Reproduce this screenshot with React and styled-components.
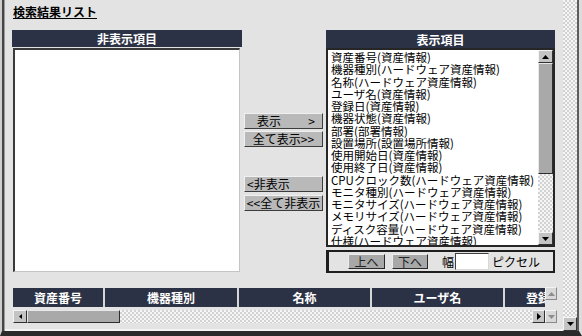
import styled, { createGlobalStyle } from 'styled-components';

const GlobalStyle = createGlobalStyle`
  html, body {
    margin: 0;
    padding: 0;
    background: #e3e3e3;
  }
  body {
    font-family: "Noto Sans CJK JP", "DejaVu Sans", sans-serif;
    font-size: 12px;
    color: #000;
  }
`;

const NAVY = '#2c3245';

const checker = `
  background-color: #f2f2f2;
  background-image: repeating-conic-gradient(#d2d2d2 0 25%, #f6f6f6 0 50%);
  background-size: 4px 4px;
`;

const Frame = styled.div`
  display: flex;
  width: 582px;
  height: 336px;
  box-sizing: border-box;
  border-left: 2px solid #cdcdcd;
  border-right: 3px solid #dcdcdc;
  border-bottom: 5px solid #2a2a2a;
  background: #e3e3e3;
  overflow: hidden;
`;

const Content = styled.div`
  flex: 1;
  min-width: 0;
  box-sizing: border-box;
  border-left: 2px solid #454545;
  box-shadow: inset 1px 0 0 #9a9a9a, inset 0 -2px 0 #f4f4f4;
  padding: 5px 8px 0 8px;
  display: flex;
  flex-direction: column;
`;

const Title = styled.h1`
  margin: 0 0 0 1px;
  font-size: 12px;
  line-height: 14px;
  font-weight: bold;
  text-decoration: underline;
  text-underline-offset: 1px;
`;

const Selector = styled.div`
  display: flex;
  align-items: flex-start;
  margin-top: 11px;
`;

const Panel = styled.div`
  width: ${(p) => p.$w}px;
  display: flex;
  flex-direction: column;
`;

const PanelHeader = styled.div`
  height: ${(p) => p.$h}px;
  background: ${NAVY};
  color: #fff;
  font-weight: bold;
  font-size: 12px;
  display: flex;
  align-items: center;
  justify-content: center;
`;

const HiddenList = styled.div`
  height: 224px;
  margin: 1px 2px 0 1px;
  box-sizing: border-box;
  background: #fff;
  border-top: 2px solid #3a3a3a;
  border-left: 2px solid #3a3a3a;
  border-right: 1px solid #c4c4c4;
  border-bottom: 1px solid #c4c4c4;
`;

const MoveButtons = styled.div`
  width: 79px;
  margin: 0 3px 0 2px;
  padding-top: 83px;
  display: flex;
  flex-direction: column;
`;

const MoveButton = styled.button`
  height: 16px;
  margin-top: ${(p) => p.$gap || 0}px;
  padding: 0 ${(p) => p.$pr || 4}px 0 ${(p) => p.$pl || 4}px;
  box-sizing: border-box;
  display: flex;
  align-items: center;
  justify-content: ${(p) => p.$justify || 'center'};
  background: #b9b9b9;
  border: 1px solid;
  border-color: #f0f0f0 #3c3c3c #3c3c3c #f0f0f0;
  font-family: inherit;
  font-size: 12px;
  line-height: 14px;
  color: #000;
  white-space: pre;
`;

const ShownList = styled.div`
  height: 199px;
  box-sizing: border-box;
  border: 2px solid #262626;
  background: #fff;
  display: flex;
`;

const Items = styled.ul`
  flex: 1;
  min-width: 0;
  margin: 0;
  padding: 1px 0 0 3px;
  list-style: none;
  overflow: hidden;
`;

const Item = styled.li`
  height: 12.25px;
  line-height: 12.25px;
  font-size: 11.5px;
  white-space: nowrap;
`;

const VBar = styled.div`
  width: ${(p) => p.$w}px;
  display: flex;
  flex-direction: column;
  justify-content: ${(p) => p.$justify || 'flex-start'};
`;

const ScrollBtn = styled.div`
  width: ${(p) => p.$w}px;
  height: ${(p) => p.$h}px;
  flex: none;
  box-sizing: border-box;
  display: flex;
  align-items: center;
  justify-content: center;
  background: ${(p) => (p.$dim ? '#d8d8d8' : '#c4c4c4')};
  border: 1px solid;
  border-color: ${(p) =>
    p.$dim ? '#f4f4f4 #8a8a8a #8a8a8a #f4f4f4' : '#f4f4f4 #303030 #303030 #f4f4f4'};
`;

const Thumb = styled.div`
  flex: none;
  ${(p) => (p.$vertical ? `height: ${p.$size}px;` : `width: ${p.$size}px;`)}
  box-sizing: border-box;
  background: #a9a9a9;
  border: 1px solid;
  border-color: #e8e8e8 #2e2e2e #2e2e2e #e8e8e8;
`;

const Track = styled.div`
  flex: 1;
  ${checker}
`;

const OrderBar = styled.div`
  height: 23px;
  margin-top: 3px;
  box-sizing: border-box;
  border: 2px solid #1e1e1e;
  border-left-width: 3px;
  padding-left: 19px;
  display: flex;
  align-items: center;
`;

const OrderButton = styled.button`
  width: ${(p) => p.$w}px;
  height: 15px;
  margin-right: ${(p) => p.$mr}px;
  padding: 0;
  box-sizing: border-box;
  background: #a8a8a8;
  border: 1px solid;
  border-color: #ececec #2a2a2a #2a2a2a #ececec;
  font-family: inherit;
  font-size: 12px;
  line-height: 13px;
  color: #222;
`;

const Label = styled.span`
  font-size: 12px;
  line-height: 14px;
  margin-right: ${(p) => p.$mr || 0}px;
`;

const WidthInput = styled.input`
  width: 34px;
  height: 17px;
  margin-right: 3px;
  padding: 0;
  box-sizing: border-box;
  background: #fff;
  border: 1px solid;
  border-color: #404040 #d8d8d8 #d8d8d8 #404040;
  outline: none;
`;

const TableArea = styled.div`
  display: flex;
  width: 544px;
  height: 36px;
  margin: 14px 0 0 1px;
`;

const TableScroll = styled.div`
  flex: 1;
  min-width: 0;
  padding-top: 1px;
  display: flex;
  flex-direction: column;
`;

const HeaderRow = styled.div`
  height: 19px;
  display: flex;
  overflow: hidden;
`;

const HeadCell = styled.div`
  width: ${(p) => p.$w}px;
  flex: none;
  box-sizing: border-box;
  border-right: 2px solid #d6d6d6;
  background: ${NAVY};
  color: #fff;
  font-weight: bold;
  font-size: 12px;
  display: flex;
  align-items: center;
  justify-content: center;
  white-space: nowrap;
  overflow: hidden;
`;

const HBar = styled.div`
  height: 13px;
  margin-top: 3px;
  display: flex;
`;

const WindowScroll = styled.div`
  width: 16px;
  box-sizing: border-box;
  border-right: 2px solid #5c5c5c;
  display: flex;
  flex-direction: column;
`;

const Tri = ({ dir, size = 7, color = '#000' }) => {
  const h = Math.ceil(size / 2);
  const flat = dir === 'up' || dir === 'down';
  const w = flat ? size : h;
  const hh = flat ? h : size;
  const pts = {
    up: `0,${h} ${size / 2},0 ${size},${h}`,
    down: `0,0 ${size},0 ${size / 2},${h}`,
    left: `${h},0 ${h},${size} 0,${size / 2}`,
    right: `0,0 0,${size} ${h},${size / 2}`,
  }[dir];
  return (
    <svg width={w} height={hh} viewBox={`0 0 ${w} ${hh}`}>
      <polygon points={pts} fill={color} />
    </svg>
  );
};

const shown = [
  '資産番号(資産情報)',
  '機器種別(ハードウェア資産情報)',
  '名称(ハードウェア資産情報)',
  'ユーザ名(資産情報)',
  '登録日(資産情報)',
  '機器状態(資産情報)',
  '部署(部署情報)',
  '設置場所(設置場所情報)',
  '使用開始日(資産情報)',
  '使用終了日(資産情報)',
  'CPUクロック数(ハードウェア資産情報)',
  'モニタ種別(ハードウェア資産情報)',
  'モニタサイズ(ハードウェア資産情報)',
  'メモリサイズ(ハードウェア資産情報)',
  'ディスク容量(ハードウェア資産情報)',
  '仕様(ハードウェア資産情報)',
];

const columns = [
  { label: '資産番号', w: 92 },
  { label: '機器種別', w: 134 },
  { label: '名称', w: 133 },
  { label: 'ユーザ名', w: 133 },
  { label: '登録日', w: 80 },
];

export default function App() {
  return (
    <>
      <GlobalStyle />
      <Frame>
        <Content>
          <Title>検索結果リスト</Title>
          <Selector>
            <Panel $w={230}>
              <PanelHeader $h={17}>非表示項目</PanelHeader>
              <HiddenList />
            </Panel>

            <MoveButtons>
              <MoveButton $justify="space-between" $pl={12} $pr={7}>
                <span>表示</span>
                <span>&gt;</span>
              </MoveButton>
              <MoveButton $gap={2}>全て表示&gt;&gt;</MoveButton>
              <MoveButton $gap={29} $justify="flex-start" $pl={2}>
                &lt;非表示
              </MoveButton>
              <MoveButton $gap={3}>&lt;&lt;全て非表示</MoveButton>
            </MoveButtons>

            <Panel $w={229}>
              <PanelHeader $h={18}>表示項目</PanelHeader>
              <ShownList>
                <Items>
                  {shown.map((s) => (
                    <Item key={s}>{s}</Item>
                  ))}
                </Items>
                <VBar $w={15}>
                  <ScrollBtn $w={15} $h={13}>
                    <Tri dir="up" />
                  </ScrollBtn>
                  <Thumb $vertical $size={111} />
                  <Track />
                  <ScrollBtn $w={15} $h={13}>
                    <Tri dir="down" />
                  </ScrollBtn>
                </VBar>
              </ShownList>
              <OrderBar>
                <OrderButton $w={37} $mr={7}>上へ</OrderButton>
                <OrderButton $w={36} $mr={14}>下へ</OrderButton>
                <Label $mr={1}>幅</Label>
                <WidthInput />
                <Label>ピクセル</Label>
              </OrderBar>
            </Panel>
          </Selector>

          <TableArea>
            <TableScroll>
              <HeaderRow>
                {columns.map((c) => (
                  <HeadCell key={c.label} $w={c.w}>
                    {c.label}
                  </HeadCell>
                ))}
              </HeaderRow>
              <HBar>
                <ScrollBtn $w={14} $h={13}>
                  <Tri dir="left" size={5} />
                </ScrollBtn>
                <Thumb $size={93} />
                <Track />
                <ScrollBtn $w={13} $h={13}>
                  <Tri dir="right" />
                </ScrollBtn>
              </HBar>
            </TableScroll>
            <VBar $w={12} $justify="space-between">
              <ScrollBtn $w={12} $h={13} $dim>
                <Tri dir="up" color="#8c8c8c" />
              </ScrollBtn>
              <ScrollBtn $w={12} $h={13} $dim>
                <Tri dir="down" color="#8c8c8c" />
              </ScrollBtn>
            </VBar>
          </TableArea>
        </Content>

        <WindowScroll>
          <Track />
          <ScrollBtn $w={14} $h={14}>
            <Tri dir="down" />
          </ScrollBtn>
        </WindowScroll>
      </Frame>
    </>
  );
}
